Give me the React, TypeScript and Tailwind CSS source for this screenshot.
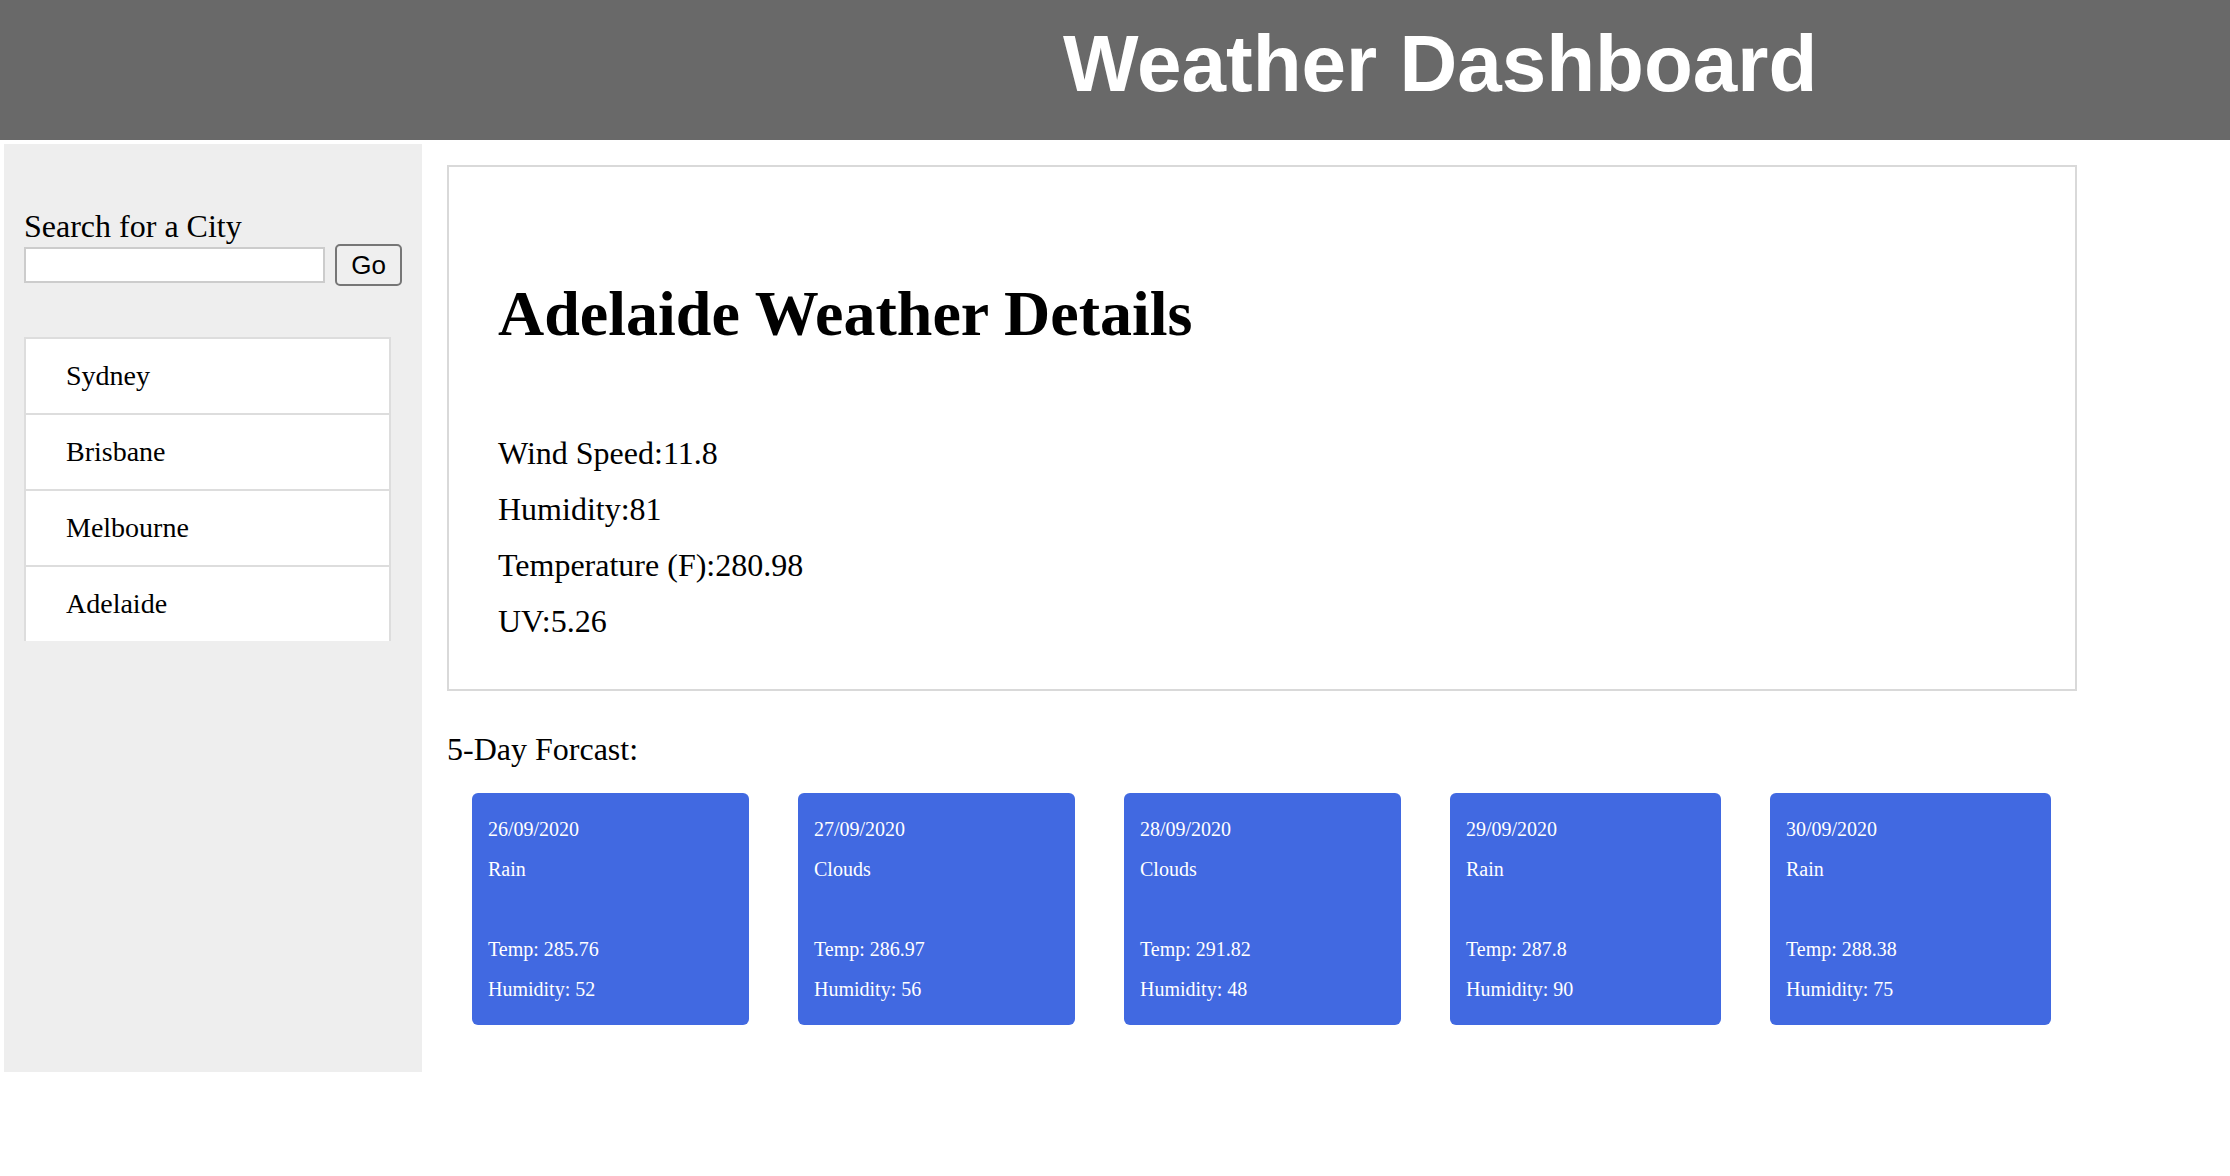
import React from "react";

const cities = ["Sydney", "Brisbane", "Melbourne", "Adelaide"];

const forecast = [
  { date: "26/09/2020", cond: "Rain", temp: "285.76", hum: "52", w: "w-[277px]" },
  { date: "27/09/2020", cond: "Clouds", temp: "286.97", hum: "56", w: "w-[277px]" },
  { date: "28/09/2020", cond: "Clouds", temp: "291.82", hum: "48", w: "w-[277px]" },
  { date: "29/09/2020", cond: "Rain", temp: "287.8", hum: "90", w: "w-[271px]" },
  { date: "30/09/2020", cond: "Rain", temp: "288.38", hum: "75", w: "w-[281px]" },
];

export default function App() {
  return (
    <div className="w-[2230px] min-h-[1176px] bg-white text-black font-['Liberation_Serif',serif]">
      <header className="h-[140px] bg-[#696969] pt-[19px] pl-[1063px]">
        <h1 className="text-[80px] leading-[90px] font-bold text-white font-['Liberation_Sans',Arial,sans-serif]">
          Weather Dashboard
        </h1>
      </header>

      <div className="flex items-start gap-[25px] pt-[4px] pl-[4px]">
        <aside className="w-[418px] h-[928px] bg-[#eeeeee] pl-[20px] pt-[64px]">
          <div className="text-[32px] leading-[36px]">Search for a City</div>
          <div className="flex items-center gap-[10px]">
            <input
              type="text"
              className="w-[301px] h-[36px] border-2 border-[#cccccc] bg-white outline-none"
            />
            <button className="w-[67px] h-[42px] border-2 border-[#767676] rounded-[5px] bg-[#efefef] text-[26px] leading-none font-['Liberation_Sans',Arial,sans-serif]">
              Go
            </button>
          </div>
          <ul className="mt-[51px] w-[367px] border-x-2 border-t-2 border-[#dddddd] bg-white">
            {cities.map((c, i) => (
              <li
                key={c}
                className={
                  i === 0
                    ? "h-[74px] flex items-center pl-[40px] text-[28px]"
                    : "h-[76px] border-t-2 border-[#dddddd] flex items-center pl-[40px] text-[28px]"
                }
              >
                {c}
              </li>
            ))}
          </ul>
        </aside>

        <main className="w-[1630px] pt-[21px]">
          <section className="border-2 border-[#d9d9d9] pl-[49px] pt-[111px] pb-[40px]">
            <h1 className="text-[64px] leading-[72px] font-bold">Adelaide Weather Details</h1>
            <div className="mt-[75px] text-[32px] leading-[56px]">
              <p>Wind Speed:11.8</p>
              <p>Humidity:81</p>
              <p>Temperature (F):280.98</p>
              <p>UV:5.26</p>
            </div>
          </section>

          <div className="mt-[40px] text-[32px] leading-[36px]">5-Day Forcast:</div>

          <div className="mt-[26px] pl-[25px] flex gap-[49px]">
            {forecast.map((f) => (
              <div
                key={f.date}
                className={`${f.w} bg-[#4169e1] rounded-[6px] text-white text-[20px] leading-[40px] p-4`}
              >
                <div>{f.date}</div>
                <div>{f.cond}</div>
                <div className="h-[40px]"></div>
                <div>Temp: {f.temp}</div>
                <div>Humidity: {f.hum}</div>
              </div>
            ))}
          </div>
        </main>
      </div>
    </div>
  );
}
